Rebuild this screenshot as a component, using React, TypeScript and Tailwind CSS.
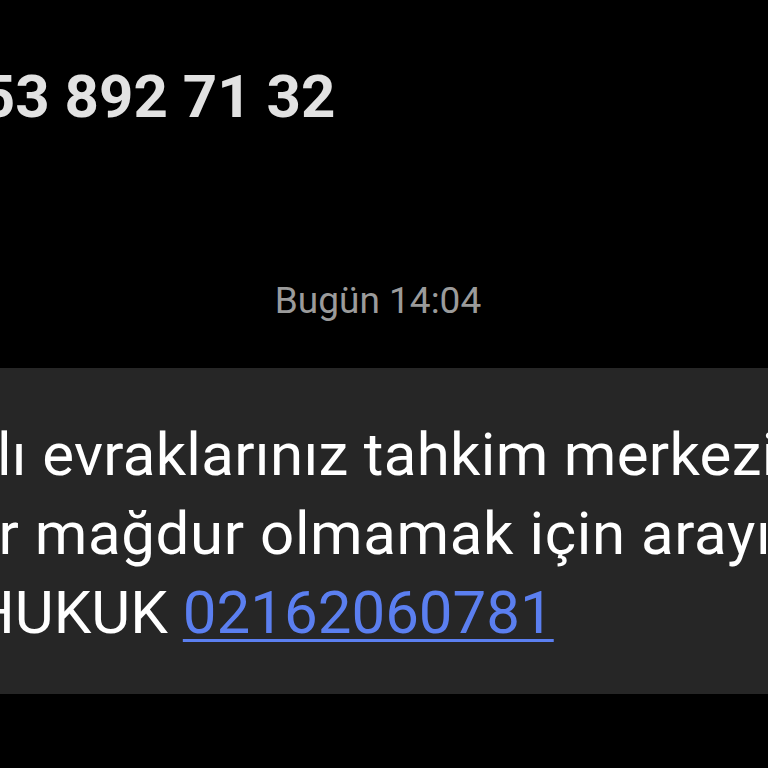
import React from "react";

export default function App() {
  return (
    <div
      className="w-[768px] h-[768px] overflow-hidden bg-black flex flex-col"
      style={{ fontFamily: "Roboto, 'Noto Sans', sans-serif" }}
    >
      {/* Sender number, cropped on the left */}
      <div className="pt-[67px] whitespace-nowrap">
        <div className="ml-[-88px] text-[60px] leading-[60px] font-bold text-[#e2e2e2]">
          0553 892 71 32
        </div>
      </div>

      {/* Timestamp */}
      <div className="mt-[155px] flex justify-center pr-[12px]">
        <span className="text-[37px] leading-[37px] text-[#9b9b9b]">Bugün 14:04</span>
      </div>

      {/* Message bubble */}
      <div className="mt-[49px] bg-[#262626] pt-[47px] pb-[42px] text-white text-[60px] leading-[79px] whitespace-nowrap">
        <div className="ml-[-36px] tracking-[0.3px]">alı evraklarınız tahkim merkezine</div>
        <div className="ml-[-34px] tracking-[0.6px]">er mağdur olmamak için arayınız</div>
        <div className="ml-[-28px]">
          HUKUK{" "}
          <a href="#" className="text-[#5b7ff0] underline decoration-[3px] underline-offset-[6px]">
            02162060781
          </a>
        </div>
      </div>
    </div>
  );
}
